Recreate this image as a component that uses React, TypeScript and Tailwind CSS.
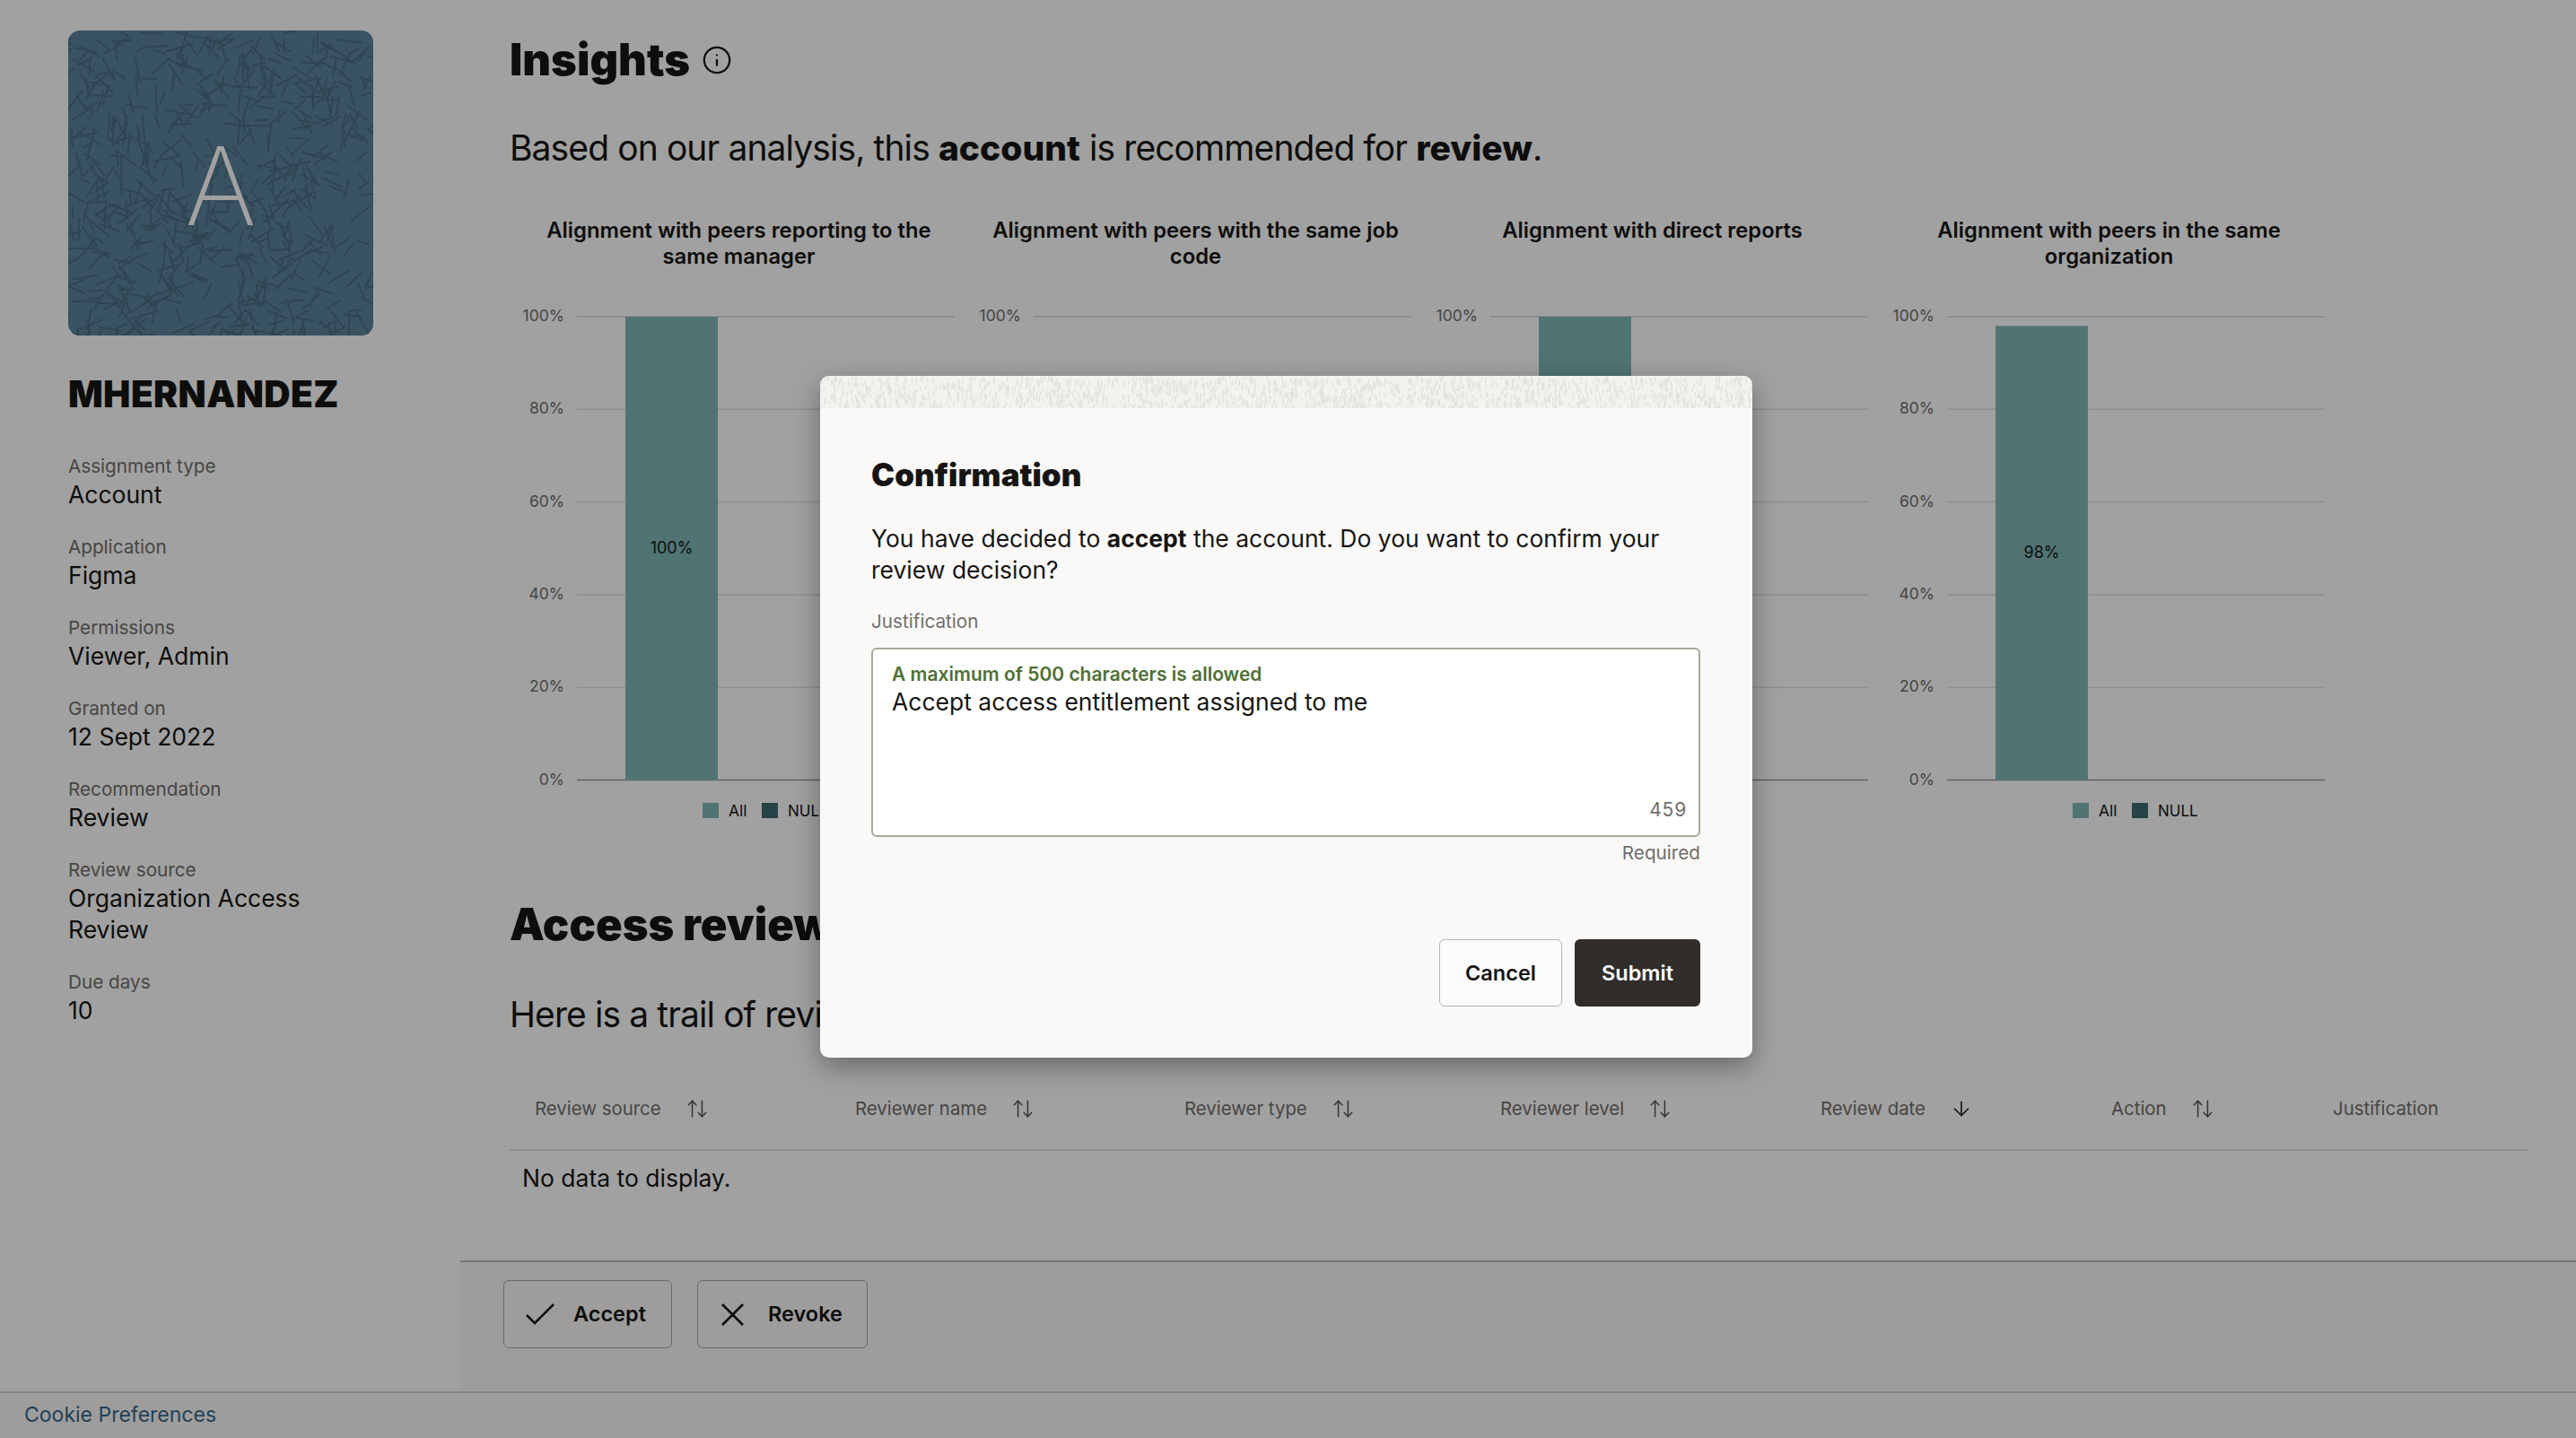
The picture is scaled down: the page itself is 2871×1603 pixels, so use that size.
import { ArrowDown, ArrowUpDown, Info } from 'lucide-react';

// small seeded generator so the textures stay the same between renders
const makeRandom = (seed: number) => () => {
  seed = (seed + 0x6d2b79f5) | 0;
  let t = Math.imul(seed ^ (seed >>> 15), 1 | seed);
  t = (t + Math.imul(t ^ (t >>> 7), 61 | t)) ^ t;
  return ((t ^ (t >>> 14)) >>> 0) / 4294967296;
};

const avatarRandom = makeRandom(7);
const avatarLines = Array.from({ length: 640 }, () => {
  const x = avatarRandom() * 340;
  const y = avatarRandom() * 340;
  const angle = avatarRandom() * Math.PI;
  const len = 14 + avatarRandom() * 16;
  return { x, y, dx: Math.cos(angle) * len, dy: Math.sin(angle) * len };
});

const stripRandom = makeRandom(21);
const stripLines = Array.from({ length: 1500 }, () => ({
  x: stripRandom() * 1039,
  y: stripRandom() * 36,
  dx: (stripRandom() - 0.5) * 3,
  dy: 3 + stripRandom() * 5,
}));

const details = [
  { label: 'Assignment type', value: 'Account' },
  { label: 'Application', value: 'Figma' },
  { label: 'Permissions', value: 'Viewer, Admin' },
  { label: 'Granted on', value: '12 Sept 2022' },
  { label: 'Recommendation', value: 'Review' },
  { label: 'Review source', value: 'Organization Access Review' },
  { label: 'Due days', value: '10' },
];

const charts = [
  { title: 'Alignment with peers reporting to the same manager', value: 100 },
  { title: 'Alignment with peers with the same job code', value: 0 },
  { title: 'Alignment with direct reports', value: 100 },
  { title: 'Alignment with peers in the same organization', value: 98 },
];

const columns = [
  { label: 'Review source', sort: 'both' },
  { label: 'Reviewer name', sort: 'both' },
  { label: 'Reviewer type', sort: 'both' },
  { label: 'Reviewer level', sort: 'both' },
  { label: 'Review date', sort: 'down' },
  { label: 'Action', sort: 'both' },
  { label: 'Justification', sort: 'none' },
];

const Avatar = () => (
  <div className="relative w-[340px] h-[340px] ml-[76px] rounded-[13px] overflow-hidden bg-[#5c849b] flex items-center justify-center">
    <svg className="absolute inset-0" width="340" height="340" viewBox="0 0 340 340">
      {avatarLines.map((l, i) => (
        <line key={i} x1={l.x} y1={l.y} x2={l.x + l.dx} y2={l.y + l.dy} stroke="#4a6e84" strokeWidth="2" />
      ))}
    </svg>
    <span className="relative text-[121px] leading-none font-extralight text-[#fff] mt-[6px]">A</span>
  </div>
);

const Chart = ({ title, value }: { title: string; value: number }) => {
  const top = 13;
  const step = 103.3;
  const bottom = top + step * 5;
  const barTop = bottom - (value / 100) * (step * 5);
  return (
    <div className="w-[509px]">
      <h3 className="h-[60px] px-[20px] text-center text-[23.8px] leading-[29px] font-semibold text-[#161513]">{title}</h3>
      <svg className="mt-[38px] block" width="509" height="580" viewBox="0 0 509 580" fontFamily="Inter, sans-serif">
        {[100, 80, 60, 40, 20, 0].map((tick, i) => (
          <g key={tick}>
            <line x1="74" x2="495" y1={top + step * i} y2={top + step * i} stroke={tick === 0 ? '#9b9a98' : '#e2e1df'} strokeWidth={tick === 100 ? 2 : 1.5} />
            <text x="60" y={top + step * i + 5} textAnchor="end" fontSize="17.5" fill="#6f6e6c">{tick}%</text>
          </g>
        ))}
        {value > 0 && (
          <>
            <rect x="128" y={barTop} width="103" height={bottom - barTop} fill="#7fb8b6" />
            <text x="179.5" y={(barTop + bottom) / 2 + 6} textAnchor="middle" fontSize="18" fill="#161513">{value}%</text>
          </>
        )}
        <rect x="214" y="555" width="18" height="17" fill="#7fb8b6" />
        <text x="243" y="570" fontSize="17.5" fill="#161513">All</text>
        <rect x="280" y="555" width="18" height="17" fill="#3f6a73" />
        <text x="309" y="570" fontSize="17" fill="#161513">NULL</text>
      </svg>
    </div>
  );
};

const App = () => {
  return (
    <div className="relative w-[2871px] h-[1603px] flex flex-col overflow-hidden bg-white font-['Inter',sans-serif] text-[#161513]">
      <div className="flex flex-1 min-h-0">
        <aside className="w-[513px] shrink-0 pt-[34px]">
          <Avatar />
          <h2 className="mt-[41px] ml-[76px] text-[40.5px] leading-[50px] font-black tracking-[0.4px] text-[#161513]">MHERNANDEZ</h2>
          <dl className="mt-[41px] ml-[76px] w-[339px] flex flex-col gap-[27px]">
            {details.map((d) => (
              <div key={d.label}>
                <dt className="text-[20.7px] leading-[28px] text-[#716f6d]">{d.label}</dt>
                <dd className="text-[26.5px] leading-[35px]">{d.value}</dd>
              </div>
            ))}
          </dl>
        </aside>

        <main className="flex-1 min-w-0 flex flex-col">
          <div className="flex-1 min-h-0 pl-[55px] pt-[37px]">
            <div className="flex items-center gap-[13px]">
              <h1 className="text-[49px] leading-[60px] font-black">Insights</h1>
              <Info size={34} strokeWidth={1.6} />
            </div>
            <p className="mt-[43px] text-[39px] leading-[50px] tracking-[-0.9px]">
              Based on our analysis, this <b className="font-extrabold tracking-[0px]">account</b> is recommended for <b className="font-extrabold tracking-[0px]">review</b>.
            </p>
            <div className="mt-[52px] ml-[1px] flex">
              {charts.map((c) => (
                <Chart key={c.title} title={c.title} value={c.value} />
              ))}
            </div>
            <h2 className="mt-[81px] text-[49px] leading-[60px] font-black">Access review history</h2>
            <p className="mt-[45px] text-[39px] leading-[50px] tracking-[-0.9px]">Here is a trail of review actions for this account.</p>
            <div className="mt-[36px] w-[2250px]">
              <div className="h-[91px] grid grid-cols-[357px_367px_352px_357px_324px_247px_246px] items-center border-b-2 border-[#e2e1df]">
                {columns.map((col) => (
                  <div key={col.label} className="pl-[28px] flex items-center gap-[27px] text-[20.4px] text-[#716f6d]">
                    {col.label}
                    {col.sort === 'both' && <ArrowUpDown size={26} strokeWidth={1.4} className="text-[#54534f]" />}
                    {col.sort === 'down' && <ArrowDown size={26} strokeWidth={1.4} className="text-[#161513]" />}
                  </div>
                ))}
              </div>
              <p className="pl-[14px] pt-[13px] text-[26.5px] leading-[35px]">No data to display.</p>
            </div>
          </div>

          <div className="h-[146px] shrink-0 border-t-2 border-[#bdbcba] bg-[#fbf9f8] pl-[48px] pt-[20px] flex items-start gap-[28px]">
            <button className="w-[188px] h-[76px] flex items-center pl-[24px] gap-[21px] border border-[#a9a8a6] rounded-[6px] text-[23.5px] font-semibold text-[#161513]">
              <svg width="32" height="24" viewBox="0 0 32 24" fill="none" stroke="#161513" strokeWidth="2.6">
                <path d="M1 13l9 9L31 1" />
              </svg>
              Accept
            </button>
            <button className="w-[190px] h-[76px] flex items-center pl-[26px] gap-[27px] border border-[#a9a8a6] rounded-[6px] text-[23.5px] font-semibold text-[#161513]">
              <svg width="25" height="25" viewBox="0 0 25 25" fill="none" stroke="#161513" strokeWidth="2.6">
                <path d="M1 1l23 23M24 1L1 24" />
              </svg>
              Revoke
            </button>
          </div>
        </main>
      </div>

      <footer className="h-[52px] shrink-0 border-t-2 border-[#d4d3d1] bg-[#fbf9f8] pl-[27px] pb-[2px] flex items-center">
        <a className="text-[23px] text-[#33688c]">Cookie Preferences</a>
      </footer>

      {/* dimmed backdrop and dialog */}
      <div className="absolute inset-0 bg-black/[.37] flex items-center justify-center pr-[4px] pb-[5px]">
        <div className="w-[1039px] h-[760px] rounded-[10px] overflow-hidden bg-[#fbf9f8] shadow-[0_10px_30px_rgba(0,0,0,0.35)]">
          <svg className="block bg-[#f3f2ef]" width="1039" height="36" viewBox="0 0 1039 36">
            {stripLines.map((l, i) => (
              <line key={i} x1={l.x} y1={l.y} x2={l.x + l.dx} y2={l.y + l.dy} stroke="#e3e2df" strokeWidth="1.6" />
            ))}
          </svg>
          <div className="px-[57px]">
            <h2 className="mt-[50px] text-[35px] leading-[48px] font-black">Confirmation</h2>
            <p className="mt-[30px] text-[26.5px] leading-[35px] text-[#161513]">
              You have decided to <b className="font-bold">accept</b> the account. Do you want to confirm your review decision?
            </p>
            <label className="block mt-[26px] text-[20.7px] leading-[28px] text-[#6f6e6c]">Justification</label>
            <div className="relative mt-[15px] mr-[1px] h-[211px] bg-white border-2 border-[#a5aa98] rounded-[6px] pl-[21px] pt-[15px]">
              <div className="text-[21px] leading-[26px] font-semibold text-[#4f6f35]">A maximum of 500 characters is allowed</div>
              <div className="text-[26.5px] leading-[35px] text-[#161513]">Accept access entitlement assigned to me</div>
              <span className="absolute right-[13px] bottom-[15px] text-[21px] leading-[26px] tracking-[0.04em] text-[#6f6e6c]">459</span>
            </div>
            <div className="mt-[4px] mr-[1px] text-right text-[20.7px] leading-[28px] text-[#6f6e6c]">Required</div>
            <div className="mt-[82px] mr-[1px] flex justify-end gap-[14px]">
              <button className="w-[137px] h-[75px] bg-white/40 border border-[#b5b4b2] rounded-[6px] text-[23.5px] font-semibold">Cancel</button>
              <button className="w-[140px] h-[75px] bg-[#312d2a] rounded-[6px] text-[23.5px] font-semibold text-white">Submit</button>
            </div>
          </div>
        </div>
      </div>
    </div>
  );
};

export default App;
